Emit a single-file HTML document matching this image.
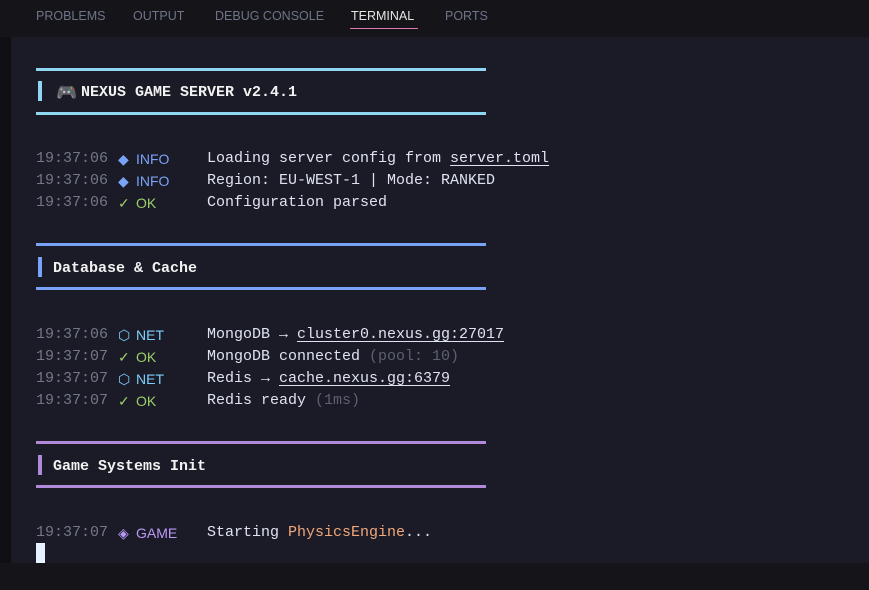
<!DOCTYPE html>
<html><head><meta charset="utf-8"><style>
*{margin:0;padding:0;box-sizing:border-box}
body{width:869px;height:590px;background:#141419;position:relative;overflow:hidden;font-family:"Liberation Mono",monospace;font-size:15px;color:#dfe3f0}
.tabs{position:absolute;top:0;left:0;width:869px;height:37px;background:#141419;font-family:"Liberation Sans",sans-serif;font-size:12.5px;color:#6f7489}
.tabs span{position:absolute;top:9px}
.term{position:absolute;left:11px;top:37px;width:858px;height:526px;background:#1a1b26}
.r{position:absolute;left:36px;height:22px;line-height:22px;white-space:pre}
.ts{color:#737887}
.lv{position:absolute;left:82px;top:0;font-family:"Liberation Sans",sans-serif;font-size:14px}
.lv b{font-weight:normal;display:inline-block;width:18px}
.msg{position:absolute;left:171px;top:0}
.u{text-decoration:underline;text-underline-offset:3px}
.dim{color:#5c6070}
.rule{position:absolute;left:36px;width:450px;height:3px}
.bar{position:absolute;left:38px;width:4px;height:20px}
.h{position:absolute;left:53px;font-weight:bold;color:#f2f2f2;line-height:22px}
</style></head><body>
<div class="tabs">
<span style="left:36px">PROBLEMS</span><span style="left:133px">OUTPUT</span><span style="left:215px">DEBUG CONSOLE</span><span style="left:351px;color:#e6e6e6">TERMINAL</span><span style="left:445px">PORTS</span>
<div style="position:absolute;left:350px;top:28px;width:68px;height:1px;background:#e27ab0"></div>
</div>
<div style="position:absolute;left:0;top:37px;width:11px;height:526px;background:#101014"></div>
<div class="term"></div>

<div class="rule" style="top:68px;background:#8fd6f0"></div>
<div class="bar" style="top:81px;background:#8fd6f0"></div>
<div class="h" style="top:82px;left:56px"><span style="font-family:'DejaVu Sans',sans-serif;color:#8d6fd0;font-size:17px">🎮</span><span style="position:absolute;left:25px;top:0;white-space:pre">NEXUS GAME SERVER v2.4.1</span></div>
<div class="rule" style="top:112px;background:#8fd6f0"></div>

<div class="r" style="top:148px"><span class="ts">19:37:06</span><span class="lv" style="color:#7aa2f7"><b>◆</b>INFO</span><span class="msg">Loading server config from <span class="u">server.toml</span></span></div>
<div class="r" style="top:170px"><span class="ts">19:37:06</span><span class="lv" style="color:#7aa2f7"><b>◆</b>INFO</span><span class="msg">Region: EU-WEST-1 | Mode: RANKED</span></div>
<div class="r" style="top:192px"><span class="ts">19:37:06</span><span class="lv" style="color:#9ece6a"><b>✓</b>OK</span><span class="msg">Configuration parsed</span></div>

<div class="rule" style="top:243px;background:#7aa2f7"></div>
<div class="bar" style="top:257px;background:#7aa2f7"></div>
<div class="h" style="top:258px">Database &amp; Cache</div>
<div class="rule" style="top:287px;background:#7aa2f7"></div>

<div class="r" style="top:324px"><span class="ts">19:37:06</span><span class="lv" style="color:#7dcfff"><b>⬡</b>NET</span><span class="msg">MongoDB → <span class="u">cluster0.nexus.gg:27017</span></span></div>
<div class="r" style="top:346px"><span class="ts">19:37:07</span><span class="lv" style="color:#9ece6a"><b>✓</b>OK</span><span class="msg">MongoDB connected <span class="dim">(pool: 10)</span></span></div>
<div class="r" style="top:368px"><span class="ts">19:37:07</span><span class="lv" style="color:#7dcfff"><b>⬡</b>NET</span><span class="msg">Redis → <span class="u">cache.nexus.gg:6379</span></span></div>
<div class="r" style="top:390px"><span class="ts">19:37:07</span><span class="lv" style="color:#9ece6a"><b>✓</b>OK</span><span class="msg">Redis ready <span class="dim">(1ms)</span></span></div>

<div class="rule" style="top:441px;background:#b08ad8"></div>
<div class="bar" style="top:455px;background:#b08ad8"></div>
<div class="h" style="top:456px">Game Systems Init</div>
<div class="rule" style="top:485px;background:#b08ad8"></div>

<div class="r" style="top:522px"><span class="ts">19:37:07</span><span class="lv" style="color:#bb9af7"><b>◈</b>GAME</span><span class="msg">Starting <span style="color:#f0a77a">PhysicsEngine</span>...</span></div>
<div style="position:absolute;left:36px;top:543px;width:9px;height:20px;background:#e6f2ff"></div>
</body></html>
